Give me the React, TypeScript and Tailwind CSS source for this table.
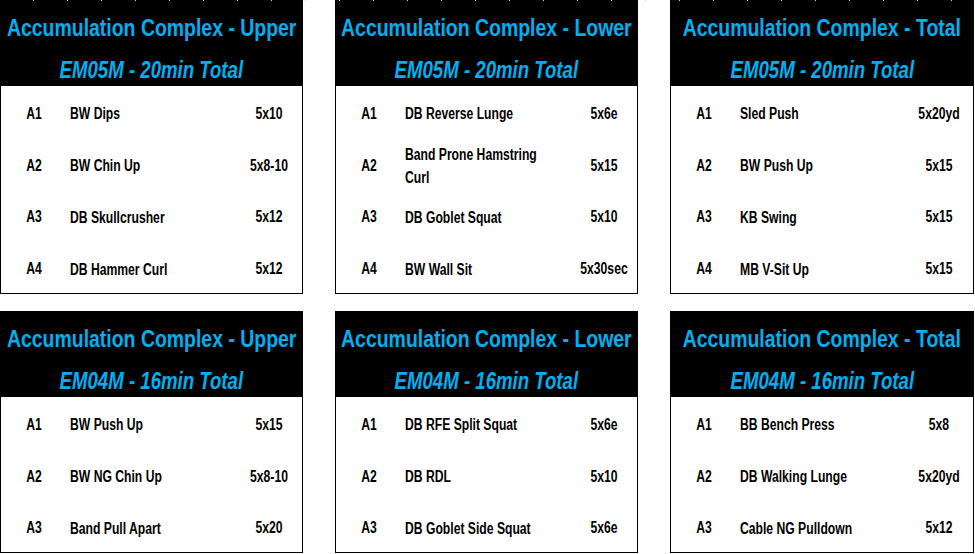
import React from 'react';

type Row = { id: string; name: string; reps: string };
type Block = { title: string; scheme: string; rows: Row[] };

const blocks: Block[] = [
  {
    title: 'Accumulation Complex - Upper',
    scheme: 'EM05M - 20min Total',
    rows: [
      { id: 'A1', name: 'BW Dips', reps: '5x10' },
      { id: 'A2', name: 'BW Chin Up', reps: '5x8-10' },
      { id: 'A3', name: 'DB Skullcrusher', reps: '5x12' },
      { id: 'A4', name: 'DB Hammer Curl', reps: '5x12' },
    ],
  },
  {
    title: 'Accumulation Complex - Lower',
    scheme: 'EM05M - 20min Total',
    rows: [
      { id: 'A1', name: 'DB Reverse Lunge', reps: '5x6e' },
      { id: 'A2', name: 'Band Prone Hamstring Curl', reps: '5x15' },
      { id: 'A3', name: 'DB Goblet Squat', reps: '5x10' },
      { id: 'A4', name: 'BW Wall Sit', reps: '5x30sec' },
    ],
  },
  {
    title: 'Accumulation Complex - Total',
    scheme: 'EM05M - 20min Total',
    rows: [
      { id: 'A1', name: 'Sled Push', reps: '5x20yd' },
      { id: 'A2', name: 'BW Push Up', reps: '5x15' },
      { id: 'A3', name: 'KB Swing', reps: '5x15' },
      { id: 'A4', name: 'MB V-Sit Up', reps: '5x15' },
    ],
  },
  {
    title: 'Accumulation Complex - Upper',
    scheme: 'EM04M - 16min Total',
    rows: [
      { id: 'A1', name: 'BW Push Up', reps: '5x15' },
      { id: 'A2', name: 'BW NG Chin Up', reps: '5x8-10' },
      { id: 'A3', name: 'Band Pull Apart', reps: '5x20' },
    ],
  },
  {
    title: 'Accumulation Complex - Lower',
    scheme: 'EM04M - 16min Total',
    rows: [
      { id: 'A1', name: 'DB RFE Split Squat', reps: '5x6e' },
      { id: 'A2', name: 'DB RDL', reps: '5x10' },
      { id: 'A3', name: 'DB Goblet Side Squat', reps: '5x6e' },
    ],
  },
  {
    title: 'Accumulation Complex - Total',
    scheme: 'EM04M - 16min Total',
    rows: [
      { id: 'A1', name: 'BB Bench Press', reps: '5x8' },
      { id: 'A2', name: 'DB Walking Lunge', reps: '5x20yd' },
      { id: 'A3', name: 'Cable NG Pulldown', reps: '5x12' },
    ],
  },
];

// no narrow font installed, so squeeze Liberation Sans to an Arial Narrow-ish width
const Card = ({ block }: { block: Block }) => (
  <div className="flex flex-col">
    <div className="h-[86px] bg-black flex flex-col items-center text-[#00b0f0] font-bold">
      <div className="mt-[14px] h-[28px] leading-[28px] text-[24px] whitespace-nowrap scale-x-[0.81]">
        {block.title}
      </div>
      <div className="mt-[14px] h-[28px] leading-[28px] text-[23px] italic whitespace-nowrap scale-x-[0.81]">
        {block.scheme}
      </div>
    </div>
    <div className="border-x border-b border-black bg-white">
      {block.rows.map((r, i) => (
        <div
          key={i}
          className="grid grid-cols-[66px_169px_66px] items-center h-[51.75px] pt-[4px] text-[16px] font-bold text-black"
        >
          <div className="text-center scale-x-[0.76]">{r.id}</div>
          <div className="pl-[3px]">
            <div className="w-[196px] leading-[23px] origin-left scale-x-[0.76]">{r.name}</div>
          </div>
          <div className="text-center whitespace-nowrap scale-x-[0.76]">{r.reps}</div>
        </div>
      ))}
    </div>
  </div>
);

export default function App() {
  return (
    <div
      className="relative w-[975px] h-[554px] bg-white overflow-hidden"
      style={{ fontFamily: '"Liberation Sans", Arial, sans-serif' }}
    >
      {/* faint sheet gridline ticks along the very top edge */}
      <div className="absolute top-0 left-0 w-full h-px z-10 pointer-events-none bg-[repeating-linear-gradient(to_right,transparent_0px,transparent_33px,#d9d9d9_33px,#d9d9d9_34px)]" />
      <div className="grid grid-cols-[303px_303px_304px] gap-x-[32px] gap-y-[17px] items-start">
        {blocks.map((b, i) => (
          <Card key={i} block={b} />
        ))}
      </div>
    </div>
  );
}
